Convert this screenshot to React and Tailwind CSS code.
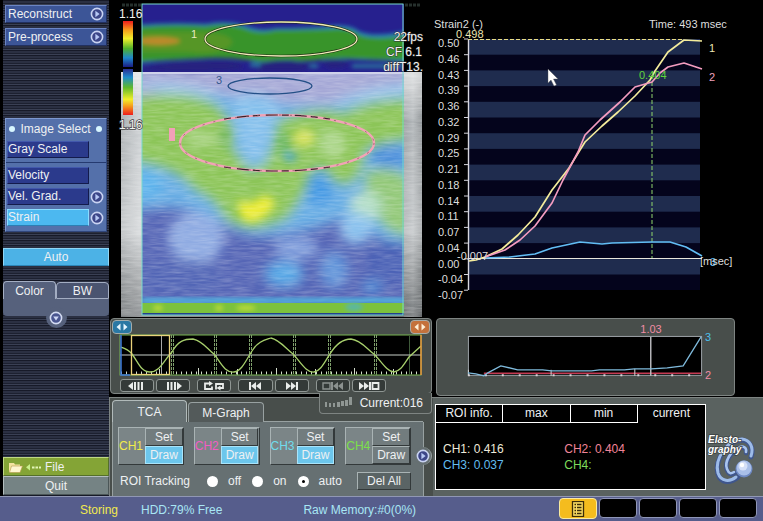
import { useState } from "react"

const scale = ["0.50", "0.46", "0.43", "0.39", "0.36", "0.32", "0.29", "0.25", "0.21", "0.18", "0.14", "0.11", "0.07", "0.04", "0.00", "-0.04", "-0.07"]

const channels = [
  { name: "CH1", color: "text-[#f0ec4a]", drawing: true },
  { name: "CH2", color: "text-[#f25cc4]", drawing: true },
  { name: "CH3", color: "text-[#6fdcec]", drawing: true },
  { name: "CH4", color: "text-[#7be04a]", drawing: false },
]

const bevel = "border border-t-[#a9b3b4] border-l-[#a9b3b4] border-r-[#33393a] border-b-[#33393a]"

function PlayIcon() {
  return (
    <svg viewBox="0 0 14 14" className="h-[14px] w-[14px] shrink-0">
      <circle cx="7" cy="7" r="5.6" fill="#3c4688" stroke="#c9d3f2" strokeWidth="1.6" />
      <path d="M5.4 3.8 L9.6 7 L5.4 10.2 Z" fill="#b7c8f4" />
    </svg>
  )
}

function SideButton({ label }) {
  return (
    <button className="flex h-[18px] w-full items-center justify-between border border-t-[#6b85c4] border-l-[#6b85c4] border-r-[#22305f] border-b-[#22305f] bg-[#3c5597] px-[2px] text-left">
      {label}
      <PlayIcon />
    </button>
  )
}

function ModeButton({ label, active, more, onClick }) {
  return (
    <div className="flex items-center gap-px">
      <button
        onClick={onClick}
        className={
          "h-[17px] w-[82px] border text-left leading-[15px] " +
          (active
            ? "border-[#8bdcff] border-b-[#2c7fb4] bg-[#4cb8f0]"
            : "border-t-[#4258ac] border-l-[#4258ac] border-r-[#131b4c] border-b-[#131b4c] bg-[#2b3a8c]")
        }
      >
        {label}
      </button>
      {more && <PlayIcon />}
    </div>
  )
}

function Sidebar() {
  const [mode, setMode] = useState("Strain")

  return (
    <aside className="flex flex-col border-l-[3px] border-black bg-[repeating-linear-gradient(180deg,#171a28_0px,#171a28_1px,#2b3042_1px,#2b3042_3px,#1d2130_3px,#1d2130_4px,#3a4054_4px,#3a4054_5px)] pt-[5px]">
      <div className="flex flex-col gap-[5px] px-[2px]">
        <SideButton label="Reconstruct" />
        <SideButton label="Pre-process" />
      </div>

      <div className="mx-[2px] mt-[72px] border border-t-[#7d98cf] border-l-[#7d98cf] border-r-[#31477c] border-b-[#31477c] bg-[#5470aa] pl-px pb-[5px]">
        <h2 className="flex h-[19px] items-center justify-between px-[2px]">
          <span className="h-[6px] w-[6px] rounded-full bg-[#d8f6ff]" />
          Image Select
          <span className="mr-[2px] h-[6px] w-[6px] rounded-full bg-[#d8f6ff]" />
        </h2>
        <div className="mt-[3px]">
          <ModeButton label="Gray Scale" active={mode === "Gray Scale"} onClick={() => setMode("Gray Scale")} />
        </div>
        <div className="mt-[4px] -ml-px border-t border-[#253a70]" />
        <div className="mt-[4px] flex flex-col gap-[4px]">
          <ModeButton label="Velocity" active={mode === "Velocity"} onClick={() => setMode("Velocity")} />
          <ModeButton label="Vel. Grad." more active={mode === "Vel. Grad."} onClick={() => setMode("Vel. Grad.")} />
          <ModeButton label="Strain" more active={mode === "Strain"} onClick={() => setMode("Strain")} />
        </div>
      </div>

      <button className="mt-[16px] h-[18px] border border-t-[#8fd6f6] border-x-[#8fd6f6] border-b-[#2c86b8] bg-[#4cb2e6]">Auto</button>

      <div className="mt-[15px]">
        <div className="flex items-end">
          <button className="h-[18px] flex-1 rounded-t border border-b-0 border-[#a3adc2] bg-[#56617c]">Color</button>
          <button className="h-[17px] flex-1 rounded-t border border-[#a3adc2] bg-[#4a5470]">BW</button>
        </div>
        <div className="flex h-[17px] justify-center rounded-b bg-[#56617c]">
          <button aria-label="Expand" className="mt-[8px] flex h-[21px] w-[21px] items-center justify-center rounded-full bg-[#56617c]">
            <svg viewBox="0 0 14 14" className="h-[14px] w-[14px]">
              <circle cx="7" cy="7" r="5.6" fill="#4a5690" stroke="#d3dbf2" strokeWidth="1.6" />
              <path d="M4.2 5.4 H9.8 L7 9.4 Z" fill="#cfd8f6" />
            </svg>
          </button>
        </div>
      </div>

      <div className="mt-auto pb-px">
        <button className="flex h-[19px] w-full items-center border border-t-[#bfd884] border-l-[#bfd884] border-r-[#55702a] border-b-[#55702a] bg-[#84a436] pl-[4px]">
          <svg viewBox="0 0 34 14" className="h-[14px] w-[34px]">
            <path d="M1 3 H6 L7 4.5 H12 V12 H1 Z" fill="#f4e3a0" />
            <path d="M3.5 6 H14.5 L12 12.5 H1.5 Z" fill="#fff6cf" stroke="#b59a4a" strokeWidth="0.6" />
            <path d="M22 4 V10.5 L18 7.3 Z" fill="#c9f08c" />
            <path d="M24 7.5 h2.5 M27.5 7.5 h2.5 M31 7.5 h2" stroke="#e4f5b8" strokeWidth="2" />
          </svg>
          <span className="pl-[3px]">File</span>
        </button>
        <button className="h-[19px] w-full border border-t-[#b3bebe] border-l-[#b3bebe] border-r-[#4b5657] border-b-[#4b5657] bg-[#758384]">Quit</button>
      </div>
    </aside>
  )
}

function Elastogram() {
  return (
    <svg viewBox="109 0 324 318" className="block w-full font-['Liberation_Sans',Arial,sans-serif]">
      <defs>
        <linearGradient id="tissue" x1="0" x2="1" y1="0" y2="0">
          <stop offset="0" stopColor="#a2a7aa" />
          <stop offset="0.06" stopColor="#c4c8cb" />
          <stop offset="0.93" stopColor="#8d9296" />
          <stop offset="0.97" stopColor="#a9aeb1" />
          <stop offset="1" stopColor="#84898c" />
        </linearGradient>
        <linearGradient id="depth" x1="0" x2="0" y1="0" y2="1">
          <stop offset="0" stopColor="#fff" stopOpacity="0.65" />
          <stop offset="0.2" stopColor="#fff" stopOpacity="0.1" />
          <stop offset="0.65" stopColor="#fff" stopOpacity="0.35" />
          <stop offset="1" stopColor="#000" stopOpacity="0.25" />
        </linearGradient>
        <linearGradient id="barTop" x1="0" x2="0" y1="0" y2="1">
          <stop offset="0" stopColor="#ee1c1c" />
          <stop offset="0.2" stopColor="#f5a01c" />
          <stop offset="0.38" stopColor="#f2ee2a" />
          <stop offset="0.6" stopColor="#4fb02c" />
          <stop offset="0.8" stopColor="#1f88cc" />
          <stop offset="1" stopColor="#1a1c84" />
        </linearGradient>
        <linearGradient id="barBottom" x1="0" x2="0" y1="1" y2="0">
          <stop offset="0" stopColor="#ee1c1c" />
          <stop offset="0.2" stopColor="#f5a01c" />
          <stop offset="0.34" stopColor="#f2ee2a" />
          <stop offset="0.6" stopColor="#5fb82c" />
          <stop offset="0.82" stopColor="#1f8ccc" />
          <stop offset="1" stopColor="#2a2f94" />
        </linearGradient>
        <clipPath id="roi"><rect x="142" y="4" width="262" height="311" /></clipPath>
        <filter id="soft" x="-40%" y="-40%" width="180%" height="180%"><feGaussianBlur stdDeviation="6" /></filter>
        <filter id="edge" x="-20%" y="-40%" width="140%" height="180%"><feGaussianBlur stdDeviation="2" /></filter>
        <filter id="bloom" x="-40%" y="-40%" width="180%" height="180%"><feGaussianBlur stdDeviation="4" /></filter>
        <filter id="speckle" x="0" y="0" width="100%" height="100%">
          <feTurbulence type="fractalNoise" baseFrequency="0.06 0.5" numOctaves="2" seed="4" />
          <feColorMatrix values="0 0 0 0 1  0 0 0 0 1  0 0 0 0 1  1.2 0 0 0 -0.4" />
        </filter>
      </defs>

      <rect x="109" y="0" width="324" height="318" fill="#000" />
      <rect x="121" y="72" width="301" height="245" fill="url(#tissue)" />
      <rect x="121" y="72" width="301" height="245" fill="url(#depth)" />
      <path d="M122 5 H141 M405 5 H421" stroke="#26302d" strokeWidth="3" strokeDasharray="3 1" />

      <g clipPath="url(#roi)">
        <rect x="142" y="4" width="262" height="311" fill="#5666b6" />
        <g filter="url(#soft)">
          <rect x="130" y="60" width="290" height="52" fill="#a5a8d6" />
          <path d="M130 84 Q180 80 216 92 L260 104 L330 104 Q370 84 415 84 V100 L340 112 L230 112 Z" fill="#9cc8ec" />
          <path d="M130 108 Q190 88 260 100 Q330 112 415 92 V240 Q380 250 350 214 Q320 230 290 232 Q250 244 220 222 Q190 200 130 212 Z" fill="#69ade4" />
          <path d="M130 98 Q180 88 212 102 Q238 118 232 146 L250 170 Q278 156 276 122 Q310 104 344 112 Q370 98 415 98 V140 Q378 142 366 152 Q360 190 340 184 Q326 180 314 172 Q302 200 288 218 Q254 238 226 220 Q212 196 196 192 Q176 166 130 162 Z" fill="#8cc558" />
          <path d="M366 170 Q396 164 412 180 V236 Q388 236 378 218 Q360 200 366 170 Z" fill="#92c878" />
          <ellipse cx="366" cy="206" rx="16" ry="14" fill="#b5dfc8" />
          <ellipse cx="356" cy="228" rx="16" ry="16" fill="#8cc2ee" />
          <path d="M236 96 Q258 90 276 100 Q280 126 264 150 Q276 170 250 164 Q232 140 236 96 Z" fill="#85c0ec" />
          <ellipse cx="196" cy="238" rx="28" ry="26" fill="#8fabe2" />
          <ellipse cx="180" cy="278" rx="42" ry="18" fill="#5366b6" />
          <ellipse cx="284" cy="274" rx="19" ry="13" fill="#58a8e6" />
          <ellipse cx="296" cy="248" rx="22" ry="12" fill="#809edc" />
          <ellipse cx="334" cy="270" rx="14" ry="18" fill="#6496da" />
          <ellipse cx="320" cy="188" rx="13" ry="18" fill="#4398e4" />
          <ellipse cx="392" cy="262" rx="26" ry="20" fill="#4c62b6" />
          <ellipse cx="372" cy="287" rx="10" ry="6" fill="#4e92dc" />
          <ellipse cx="148" cy="184" rx="14" ry="14" fill="#5cb2ec" />
          <ellipse cx="390" cy="156" rx="20" ry="12" fill="#4b8edb" />
        </g>
        <g filter="url(#bloom)">
          <path d="M238 200 Q252 206 262 196 Q276 196 274 206 Q262 222 250 222 Q238 220 238 200 Z" fill="#ecec34" />
          <ellipse cx="304" cy="138" rx="11" ry="9" fill="#d3e05a" />
          <ellipse cx="332" cy="144" rx="13" ry="14" fill="#acd68a" />
          <ellipse cx="204" cy="139" rx="16" ry="9" fill="#a6d27e" />
          <ellipse cx="224" cy="138" rx="5" ry="10" fill="#6cb458" />
          <ellipse cx="284" cy="144" rx="6" ry="12" fill="#6ab864" />
          <ellipse cx="290" cy="157" rx="7" ry="4" fill="#4ba6dc" />
        </g>
        <rect x="142" y="72" width="262" height="242" filter="url(#speckle)" opacity="0.35" />

        <rect x="142" y="4" width="262" height="68" fill="#26208e" />
        <g filter="url(#edge)">
          <path d="M136 25 Q170 22 206 24 Q226 20 244 25 Q260 32 276 28 Q310 28 330 26 Q350 24 360 32 Q378 38 410 30 V63 Q390 60 362 60 Q335 58 318 60 Q300 62 290 58 Q262 66 248 60 Q226 56 208 58 Q160 60 136 64 Z" fill="#2789b8" />
          <path d="M136 27 Q170 24 206 26 Q226 22 244 28 Q260 35 276 30 Q310 30 330 29 Q350 27 360 35 Q378 41 410 34 V60 Q390 60 362 59 Q335 57 318 60 Q300 62 290 60 Q262 63 248 60 Q226 57 208 58 Q160 60 136 62 Z" fill="#37942c" />
          <path d="M138 32 H190 Q236 32 232 44 Q220 56 188 52 H138 Z" fill="#5f9624" opacity="0.8" />
          <ellipse cx="158" cy="41" rx="22" ry="4" fill="#bd8a2a" />
          <path d="M144 67 Q176 60 216 61 Q250 62 240 69 Q200 74 144 70 Z M260 63 Q290 56 312 66 L300 71 H258 Z M320 62 Q336 56 348 62 Q350 68 330 68 Z" fill="#25247f" />
          <path d="M250 65 H260 M310 66 H318 M352 66 H403" stroke="#2c8ca0" strokeWidth="3" />
        </g>
        <path d="M142 73 H404" stroke="#cfd2ea" strokeWidth="2" />

        <rect x="142" y="298" width="262" height="5" fill="#4fb2e0" filter="url(#edge)" />
        <rect x="142" y="303" width="262" height="10" fill="#7cc23c" />
        <g filter="url(#edge)">
          <ellipse cx="158" cy="308" rx="5" ry="3" fill="#b5d83a" />
          <ellipse cx="219" cy="308" rx="4" ry="3" fill="#b5d83a" />
          <ellipse cx="246" cy="308" rx="10" ry="3" fill="#b5d83a" />
          <ellipse cx="354" cy="307" rx="9" ry="4" fill="#5cb8a0" />
        </g>
        <rect x="142" y="313" width="262" height="2" fill="#23408c" />
      </g>
      <rect x="121" y="74" width="21" height="243" filter="url(#speckle)" opacity="0.4" />
      <rect x="404" y="74" width="18" height="243" filter="url(#speckle)" opacity="0.4" />
      <rect x="142" y="4" width="261" height="311" fill="none" stroke="#76d8cc" strokeWidth="1" />

      <ellipse cx="281" cy="39" rx="76" ry="17" fill="none" stroke="#1c2c12" strokeWidth="2.4" />
      <ellipse cx="281" cy="39" rx="76" ry="17" fill="none" stroke="#f2edba" strokeWidth="1.3" />
      <ellipse cx="270" cy="86" rx="42" ry="8" fill="none" stroke="#234f86" strokeWidth="1.3" />
      <ellipse cx="277" cy="143" rx="97" ry="28" fill="none" stroke="#f2a3b6" strokeWidth="2.4" />
      <path d="M224 119 Q277 111 330 119 M224 167 Q277 175 330 167" fill="none" stroke="#3a2329" strokeWidth="1.2" strokeDasharray="7 6 12 4" />
      <ellipse cx="277" cy="143" rx="97" ry="28" fill="none" stroke="#8a5a68" strokeWidth="0.8" strokeDasharray="2 9" />

      <rect x="123" y="21" width="10" height="46" fill="url(#barTop)" />
      <rect x="123" y="69" width="10" height="46" fill="url(#barBottom)" />
      <rect x="169" y="128" width="6" height="13" fill="#f2a0b8" />

      <g fill="#f2f2f2" fontSize="12">
        <text x="119" y="18">1.16</text>
        <text x="119" y="129" stroke="#444" strokeWidth="1.5" paintOrder="stroke">1.16</text>
        <g stroke="#333" strokeWidth="1" paintOrder="stroke">
          <text x="423" y="41" textAnchor="end">22fps</text>
          <text x="422" y="56" textAnchor="end">CF 6.1</text>
          <text x="423" y="71" textAnchor="end">diffT13.</text>
        </g>
      </g>
      <text x="191" y="38" fontSize="11" fill="#e8ecc0">1</text>
      <text x="216" y="84" fontSize="11" fill="#34568c">3</text>
    </svg>
  )
}

function StrainChart() {
  return (
    <svg viewBox="433 0 330 318" className="block w-full font-['Liberation_Sans',Arial,sans-serif]">
      <rect x="469" y="39" width="231" height="251" fill="#04041c" />
      {scale.map((label, i) => (
        <g key={label}>
          {i % 2 === 0 && i < 16 && <rect x="469" y={39 + i * 15.7} width="231" height="15.7" fill="#1f2c4e" />}
          <path d={`M464 ${39 + i * 15.7} H468`} stroke="#d5d5dc" />
          <text x="438" y={47 + i * 15.75} fontSize="11" fill="#dedede">{label}</text>
        </g>
      ))}
      <path d="M468.5 39 V290" stroke="#d8d8e0" strokeWidth="1.4" />
      <path d="M468 258.5 H702" stroke="#e9e6dc" strokeWidth="1.2" />
      <path d="M468 39.5 H684" stroke="#e8dc86" strokeDasharray="4 2" />
      <path d="M652 82 V258" stroke="#8fd46c" strokeDasharray="4 2" />

      <g fill="none" strokeWidth="1.7" strokeLinejoin="round">
        <path d="M485 258 L510 257 L535 254 L552 248 L580 242 L602 244 L612 243 L652 242 L670 242 L686 247 L702 256" stroke="#62bdf4" />
        <path d="M469 261 L476 260 L485 257 L502 249 L518 235 L535 217 L552 190 L569 168 L580 150 L585 142 L602 126 L618 112 L635 96 L650 80 L655 71 L668 52 L684 40 L702 41" stroke="#f4ec9c" />
        <path d="M485 257 L505 250 L520 240 L535 226 L552 203 L563 180 L578 152 L585 135 L600 120 L620 102 L635 87 L652 82 L660 73 L668 67 L684 63 L702 69" stroke="#f49cc0" />
      </g>

      <g fontSize="11" fill="#dedede">
        <text x="434" y="28">Strain2 (-)</text>
        <text x="649" y="28">Time: 493 msec</text>
        <text x="456" y="38" fill="#ece6b4">0.498</text>
        <text x="457" y="260">-0.007</text>
        <text x="639" y="79" fill="#5fd43c">0.404</text>
        <text x="709" y="52" fill="#ece6b4">1</text>
        <text x="709" y="81" fill="#f0a0bc">2</text>
        <text x="710" y="266" fill="#62bdf4">3</text>
        <text x="700" y="265">[msec]</text>
      </g>

      <path d="M548 69 V83 L551 80 L554 86 L556.5 85 L553.5 79 H558 Z" fill="#fff" stroke="#555" strokeWidth="0.4" />
    </svg>
  )
}

const periods = [
  [171, 173], [214, 216], [249, 251], [293, 295], [328, 330], [374, 376],
]

function CineTrace() {
  return (
    <svg viewBox="119 335 304 42" className="block w-full">
      <rect x="120" y="336" width="301" height="40" fill="#000" />
      <path d="M121 374 H421" stroke="#d2dccb" strokeWidth="3" strokeDasharray="1 4" />
      <path d="M159.5 376 V370 M198.5 376 V369 M237.5 376 V370 M276.5 376 V369 M315.5 376 V370 M354.5 376 V369 M393.5 376 V370" stroke="#d2dccb" />
      <rect x="120" y="336" width="301" height="40" fill="none" stroke="#79b553" />
      {periods.map(([a, b]) => (
        <path key={a} d={`M${a}.5 336 V376 M${b}.5 336 V376`} stroke="#7fa06c" strokeDasharray="3 1" />
      ))}
      <path d="M409.5 337 V376" stroke="#3f5a3a" />
      <path d="M161.5 336 V376" stroke="#a8a8a8" />
      <path d="M120 356 H421" stroke="#c8cfc8" />
      <path d="M121 348 Q128 350 132 355 C138 363 141 373 150 373 C160 373 164 361 172 353 C178 342 184 340 193 340 C203 342 208 351 214 355 C221 364 225 374 234 373 C242 372 246 361 252 352 C258 342 265 341 271 339 C280 341 286 350 293 355 C300 362 306 374 314 373 C321 372 325 362 330 355 C336 345 342 340 351 340 C361 341 368 351 374 355 C381 362 387 373 394 373 C401 372 404 365 409 358 L421 347" fill="none" stroke="#a7cf6c" strokeWidth="1.3" />
      <path d="M121 336 V376 H130" fill="none" stroke="#3c78dc" strokeWidth="1.5" />
      <path d="M421 336 V376" stroke="#e8963c" strokeWidth="1.5" />
      <rect x="131.5" y="336.5" width="38" height="39" fill="none" stroke="#ead27a" strokeWidth="1.3" />
    </svg>
  )
}

function TransportButton({ label, dim, className = "", children }) {
  return (
    <button
      aria-label={label}
      className={
        "flex h-[13px] flex-1 items-center justify-center rounded-[3px] border border-[#8f9693] bg-[#343a38] " +
        (dim ? "text-[#8b918f] " : "text-[#e9ecea] ") + className
      }
    >
      <svg viewBox="0 0 26 10" className="h-[10px] w-[26px] shrink-0" fill="currentColor">{children}</svg>
    </button>
  )
}

function CinePanel() {
  return (
    <section className="relative mx-px rounded border border-[#7e8482] bg-[#484e4b] px-[8px] pt-[15px] pb-px">
      <button aria-label="Start marker" className="absolute left-px top-px flex h-[14px] w-[20px] items-center justify-center rounded border border-[#a5acaa] bg-[#2a78a4]">
        <svg viewBox="0 0 14 8" className="h-[8px] w-[14px]"><path d="M5.5 0.5 V7.5 L1.5 4 Z M8.5 0.5 V7.5 L12.5 4 Z" fill="#e4f6ff" /></svg>
      </button>
      <button aria-label="End marker" className="absolute right-px top-px flex h-[14px] w-[20px] items-center justify-center rounded border border-[#a5acaa] bg-[#c4713c]">
        <svg viewBox="0 0 14 8" className="h-[8px] w-[14px]"><path d="M5.5 0.5 V7.5 L1.5 4 Z M8.5 0.5 V7.5 L12.5 4 Z" fill="#fff0d8" /></svg>
      </button>

      <CineTrace />

      <div className="mt-[3px] ml-px mr-[37px] flex gap-[2px]">
        <TransportButton label="Step back"><path d="M4 5 L9 1 V9 Z M10 1 h2 v8 h-2 Z M13.5 1 h2 v8 h-2 Z M17 1 h2 v8 h-2 Z" /></TransportButton>
        <TransportButton label="Step forward"><path d="M22 5 L17 1 V9 Z M14 1 h2 v8 h-2 Z M10.5 1 h2 v8 h-2 Z M7 1 h2 v8 h-2 Z" /></TransportButton>
        <TransportButton label="Loop" className="ml-[5px]">
          <path d="M9 2.5 H4 V8 H11 V5.5 M15 8.5 V3 H22 V7 H19" fill="none" stroke="currentColor" strokeWidth="1.8" />
          <path d="M8 0 L12 2.5 L8 5 Z M19.5 4.5 L15.5 7 L19.5 9.5 Z" />
        </TransportButton>
        <TransportButton label="First frame" className="ml-[5px]"><path d="M7 1 h2 v8 h-2 Z M9 5 L14 1 V9 Z M14 5 L19 1 V9 Z" /></TransportButton>
        <TransportButton label="Last frame"><path d="M19 1 h-2 v8 h2 Z M17 5 L12 1 V9 Z M12 5 L7 1 V9 Z" /></TransportButton>
        <TransportButton label="Previous clip" dim className="ml-[5px]">
          <path d="M3 2 h7 v6 h-7 Z" fill="none" stroke="currentColor" strokeWidth="1.4" />
          <path d="M11 1 h2 v8 h-2 Z M13 5 L18 1 V9 Z M18 5 L23 1 V9 Z" />
        </TransportButton>
        <TransportButton label="Next clip">
          <path d="M3 1 L8 5 L3 9 Z M8 1 L13 5 L8 9 Z M13 1 h2 v8 h-2 Z" />
          <path d="M16.5 2 h6 v6 h-6 Z" fill="none" stroke="currentColor" strokeWidth="1.8" />
        </TransportButton>
      </div>

      <div className="absolute -right-px top-[74px] z-10 flex h-[21px] w-[113px] items-center justify-between rounded-b border border-t-0 border-[#7e8482] bg-[#484e4b] pl-[5px] pr-[8px]">
        <svg viewBox="0 0 28 12" className="h-[12px] w-[28px]" fill="#8f9693">
          <path d="M0 5 h2 v5 h-2 Z M4 6 h2 v4 h-2 Z M8 6 h2 v4 h-2 Z M12 5 h3 v5 h-3 Z M16 4 h3 v5 h-3 Z M20 3 h3 v6 h-3 Z M24 0 h3 v8 h-3 Z" />
        </svg>
        <span>Current:016</span>
      </div>
    </section>
  )
}

function ChannelControl({ name, color, drawing }) {
  return (
    <div className="grid flex-1 grid-cols-[27fr_39fr] border border-t-[#a9b3b4] border-l-[#a9b3b4] border-r-[#33393a] border-b-[#33393a] bg-[#7b8587]">
      <span className={"flex items-center whitespace-nowrap " + color}>{name}</span>
      <div className="flex flex-col">
        <button className={"h-[18px] bg-[#727c7e] leading-[16px] " + bevel}>Set</button>
        <button
          className={
            "h-[18px] leading-[16px] " +
            (drawing ? "border border-[#a9e4fa] bg-[#6cc6ec]" : "bg-[#727c7e] " + bevel)
          }
        >
          Draw
        </button>
      </div>
    </div>
  )
}

function TcaPanel() {
  const [tracking, setTracking] = useState("auto")

  return (
    <section className="relative flex flex-1 flex-col border-l border-t border-[#7e8482] bg-[#484e4b] pl-[2px] pt-[2px]">
      <div className="flex items-end">
        <button className="h-[22px] w-[75px] rounded-t border border-b-0 border-[#b1baba] bg-[#667072]">TCA</button>
        <button className="ml-px h-[20px] w-[76px] rounded-t border border-b-0 border-[#98a1a1] bg-[#535a5a]">M-Graph</button>
        <div className="mr-[10px] flex-1 self-end border-t border-[#98a1a1]" />
      </div>
      <div className="mr-[9px] flex flex-1 flex-col border-l border-r border-[#98a1a1] bg-[#667072] pl-[5px] pr-[12px] pt-[5px]">
        <div className="flex gap-[10px]">
          {channels.map((c) => <ChannelControl key={c.name} {...c} />)}
        </div>
        <div className="mt-[7px] flex items-center pl-[2px]">
          <span>ROI Tracking</span>
          <div className="ml-[17px] flex gap-[11px]">
            {["off", "on", "auto"].map((v) => (
              <label key={v} className="flex items-center gap-[10px]">
                <input
                  type="radio"
                  name="tracking"
                  checked={tracking === v}
                  onChange={() => setTracking(v)}
                  className="h-[11px] w-[11px] appearance-none rounded-full bg-white checked:border-[4px] checked:border-white checked:bg-black"
                />
                {v}
              </label>
            ))}
          </div>
          <button className={"ml-auto h-[18px] w-[54px] bg-[#5a6465] leading-[16px] " + bevel}>Del All</button>
        </div>
      </div>
      <button aria-label="More" className="absolute right-[1px] top-[49px] flex h-[18px] w-[18px] items-center justify-center rounded-full border-r border-[#98a1a1] bg-[#667072]">
        <PlayIcon />
      </button>
    </section>
  )
}

function RatioPanel() {
  return (
    <section className="ml-[3px] mr-[28px] rounded border border-[#7e8482] bg-[#484e4b]">
      <svg viewBox="437 319 298 76" className="block w-full font-['Liberation_Sans',Arial,sans-serif]">
        <rect x="468.5" y="336.5" width="234" height="39" fill="#000" stroke="#9da3a8" />
        <path d="M484 373.5 H702" stroke="#c43a52" strokeWidth="1.4" />
        <path d="M468 375.5 H703" stroke="#d9d2d8" strokeDasharray="2 15" strokeWidth="2" />
        <path d="M551.5 370 V376 M635.5 369 V376 M468.5 370 V376" stroke="#d5d5d5" />
        <path d="M651.5 337 V376" stroke="#c2c2c6" strokeWidth="1.4" />
        <path d="M468 373 L476 374 L484 376 L488 373 L501 366 L518 370 L543 370 L552 371 L592 371 L600 370 L625 370 L635 369 L652 369 L668 368 L684 366 L702 337" fill="none" stroke="#7fbadc" strokeWidth="1.3" />
        <g fontSize="11">
          <text x="641" y="333" fill="#f08ca4">1.03</text>
          <text x="706" y="341" fill="#4cc0ec">3</text>
          <text x="706" y="379" fill="#f08ca4">2</text>
        </g>
      </svg>
    </section>
  )
}

function ElastographyLogo() {
  return (
    <svg viewBox="706 430 57 60" className="block h-[60px] w-[57px] font-['Liberation_Sans',Arial,sans-serif]">
      <g fill="none" strokeLinecap="round">
        <path d="M751 457 C754 448 750 441 742 440 C728 440 714 460 718 474 C721 484 731 483 738 477" stroke="#3f568c" strokeWidth="5" />
        <path d="M751 456 C754 447 750 440 742 439 C728 439 714 459 718 473 C721 482 730 482 736 477" stroke="#9dbbe8" strokeWidth="3" />
        <path d="M746 453 C747 448 743 447 740 448 C731 451 724 463 727 470 C729 475 732 475 735 473" stroke="#3f568c" strokeWidth="4.5" />
        <path d="M746 452 C747 447 743 446 740 447 C731 450 724 462 727 469 C729 474 731 474 734 472" stroke="#a9c4ee" strokeWidth="2.6" />
      </g>
      <circle cx="744" cy="469" r="8.5" fill="#6f8ac4" />
      <circle cx="744" cy="468" r="7.5" fill="#a9bfe8" />
      <circle cx="743" cy="466" r="4.5" fill="#d5e0f8" />
      <circle cx="742" cy="465" r="2.2" fill="#fff" />
      <g fontSize="10" fontWeight="bold" fontStyle="italic" fill="#fff" stroke="#3b4143" strokeWidth="1.5" paintOrder="stroke">
        <text x="708" y="443">Elasto-</text>
        <text x="708" y="453">graphy</text>
      </g>
    </svg>
  )
}

function RoiPanel() {
  return (
    <section className="mt-px flex flex-1 border-t border-[#7e8482] bg-[#5a6260] pt-[6px] pb-[6px] pl-[2px]">
      <div className="flex flex-1 flex-col border border-white bg-black">
        <div className="grid grid-cols-4">
          {["ROI info.", "max", "min"].map((t) => (
            <button key={t} className="h-[18px] border-b border-r border-white leading-[17px]">{t}</button>
          ))}
          <button className="h-[18px] leading-[17px]">current</button>
        </div>
        <dl className="mt-[18px] grid grid-cols-[124fr_144fr] pl-[7px] leading-4">
          <div className="text-[#eeeada]"><dt className="inline">CH1:</dt> <dd className="inline">0.416</dd></div>
          <div className="text-[#f08498]"><dt className="inline">CH2:</dt> <dd className="inline">0.404</dd></div>
          <div className="text-[#62bdf0]"><dt className="inline">CH3:</dt> <dd className="inline">0.037</dd></div>
          <div className="text-[#7ddc5c]"><dt className="inline">CH4:</dt></div>
        </dl>
      </div>
      <div className="mt-[26px]">
        <ElastographyLogo />
      </div>
    </section>
  )
}

function StatusBar() {
  return (
    <footer className="flex h-[25px] items-center border-t border-[#9097b4] bg-[#565d8c] pt-px">
      <span className="ml-[80px] text-[#f2e94e]">Storing</span>
      <span className="ml-[23px] text-[#a8e6f4]">HDD:79% Free</span>
      <span className="ml-[81px] text-[#a8e6f4]">Raw Memory:#0(0%)</span>
      <div className="ml-auto mr-[6px] flex gap-[2px] self-start">
        <button aria-label="Report" className="flex h-[21px] w-[38px] items-center justify-center rounded border border-[#f7e9a0] bg-[#f4bc1e]">
          <svg viewBox="0 0 14 16" className="h-[16px] w-[14px]">
            <rect x="1.5" y="0.5" width="11" height="15" fill="#fbdc62" stroke="#3a2c08" strokeWidth="1.3" />
            <path d="M3.5 3.5 H10.5 M3.5 6.5 H10.5 M3.5 9.5 H10.5 M3.5 12.5 H10.5" stroke="#3a2c08" strokeWidth="1.6" />
            <path d="M5.5 2.5 V13.5" stroke="#fbdc62" strokeWidth="1" />
          </svg>
        </button>
        {["Slot 1", "Slot 2", "Slot 3", "Slot 4"].map((s) => (
          <button key={s} aria-label={s} className="h-[20px] w-[38px] rounded border border-[#8f96b8] bg-black" />
        ))}
      </div>
    </footer>
  )
}

export default function App() {
  return (
    <div className="flex min-h-screen flex-col bg-black font-['Liberation_Sans',Arial,sans-serif] text-xs text-[#eef0f2]">
      <main className="grid flex-1 grid-cols-[109fr_324fr_330fr]">
        <Sidebar />
        <div className="flex flex-col">
          <Elastogram />
          <CinePanel />
          <div className="h-[3px]" />
          <TcaPanel />
        </div>
        <div className="flex flex-col">
          <StrainChart />
          <RatioPanel />
          <RoiPanel />
        </div>
      </main>
      <StatusBar />
    </div>
  )
}
